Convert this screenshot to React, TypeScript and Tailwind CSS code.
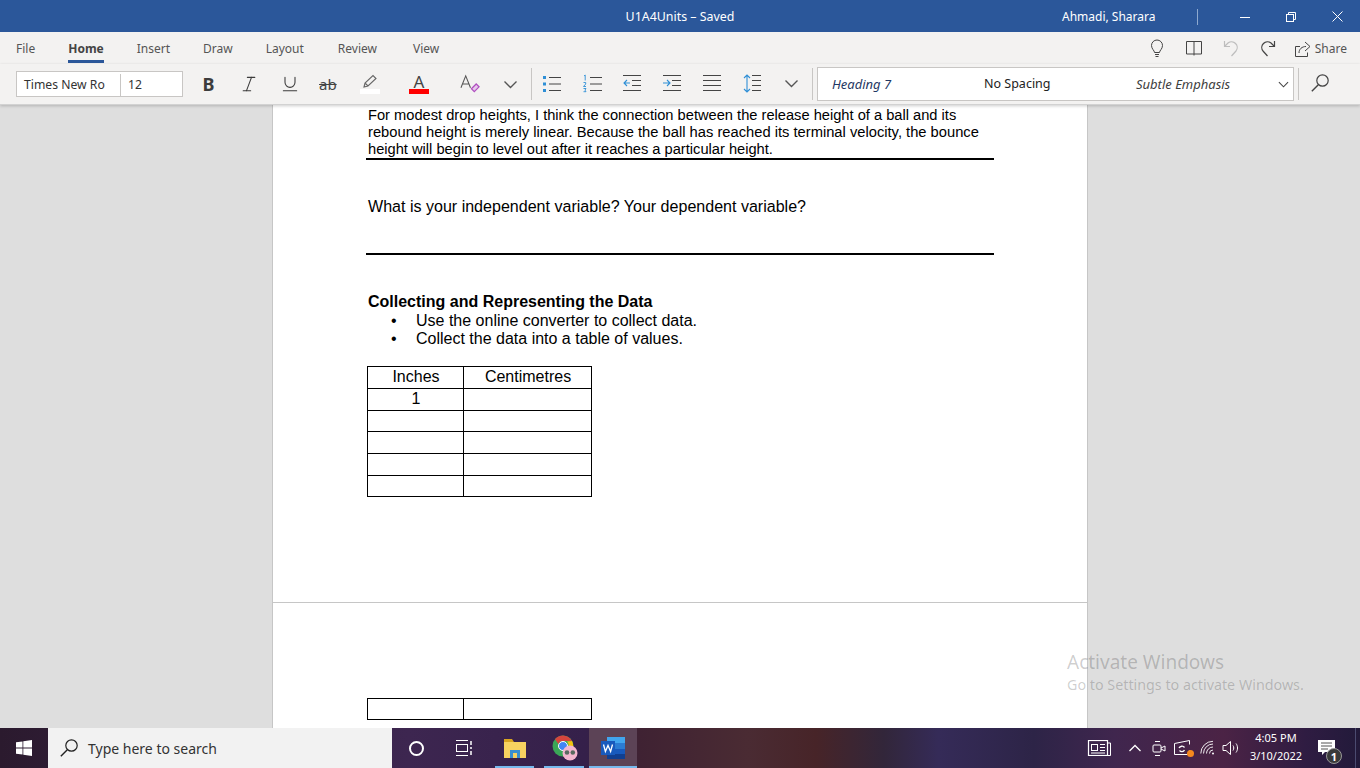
import React from "react";
import { Italic, Underline } from "lucide-react";

const UI = "font-['Noto_Sans',sans-serif]";

function Tab({ label, active, className }: { label: string; active?: boolean; className?: string }) {
  return (
    <div className={`relative flex h-8 items-center pt-[2px] ${className ?? ""}`}>
      <span className={active ? "text-[12px] font-bold text-[#444]" : "text-[12px] text-[#555]"}>{label}</span>
      {active && <div className="absolute bottom-[1px] left-0 right-0 h-[3px] bg-[#2b579a]" />}
    </div>
  );
}

function Chevron({ w = 17, color = "#555" }: { w?: number; color?: string }) {
  return (
    <svg width={w} height={w} viewBox="0 0 17 17" fill="none" stroke={color} strokeWidth="1.4" className="shrink-0">
      <path d="M2.500 5.500l6 6 6-6" />
    </svg>
  );
}

function Magnifier({ size = 18, color = "#444" }: { size?: number; color?: string }) {
  return (
    <svg width={size} height={size} viewBox="0 0 18 18" fill="none" stroke={color} strokeWidth="1.200" className="shrink-0">
      <circle cx="11.500" cy="6.500" r="5.700" />
      <path d="M7.300 10.700L.8 17.200" strokeWidth="1.400" />
    </svg>
  );
}

function ListIcon({ kind }: { kind: "bullet" | "number" | "out" | "in" | "align" | "spacing" }) {
  const dark = "#444";
  const blue = "#2e8fd6";
  return (
    <svg width="20" height="20" viewBox="0 0 20 20" fill="none" className="shrink-0">
      {kind === "bullet" && (
        <>
          <rect x="1" y="2" width="3" height="3" fill={blue} />
          <rect x="1" y="8.500" width="3" height="3" fill={blue} />
          <rect x="1" y="15" width="3" height="3" fill={blue} />
          <path d="M7 3.500h12M7 10h12M7 16.500h12" stroke={dark} />
        </>
      )}
      {kind === "number" && (
        <>
          <path d="M2 2l1.200-1v5.500M1.500 8.500h2.200v1.500L1.500 12.500h2.500M1.500 14.500h2.500l-1 1.600 1 1.600h-2.500" stroke={blue} strokeWidth="0.900" />
          <path d="M8 3.500h12M8 10h12M8 16.500h12" stroke={dark} />
        </>
      )}
      {kind === "out" && (
        <>
          <path d="M1 1.500h18M10 6.500h9M10 11.500h9M1 16.500h18" stroke={dark} />
          <path d="M8 9H2M5 6L2 9l3 3" stroke={blue} strokeWidth="1.100" />
        </>
      )}
      {kind === "in" && (
        <>
          <path d="M1 1.500h18M10 6.500h9M10 11.500h9M1 16.500h18" stroke={dark} />
          <path d="M1 9h7M5 6l3 3-3 3" stroke={blue} strokeWidth="1.100" />
        </>
      )}
      {kind === "align" && <path d="M1 1.500h18M1 6.500h18M1 11.500h18M1 16.500h18" stroke={dark} />}
      {kind === "spacing" && (
        <>
          <path d="M10 1.500h9M10 6.500h9M10 11.500h9M10 16.500h9" stroke={dark} />
          <path d="M5 1v17M2 4l3-3 3 3M2 15l3 3 3-3" stroke={blue} strokeWidth="1.100" />
        </>
      )}
    </svg>
  );
}

function Ribbon() {
  return (
    <div className={`flex h-[40px] items-start bg-[#f3f2f1] ${UI}`}>
      <div className="ml-4 mt-[7px] flex h-[26px] w-[167px] border border-[#c8c6c4] bg-white pt-[2px] text-[12.2px] text-[#333]">
        <div className="flex w-[104px] items-center border-r border-[#c8c6c4] pl-[7px]">Times New Ro</div>
        <div className="flex items-center pl-[7px]">12</div>
      </div>
      <div className="ml-[17px] mt-[10px] flex h-[20px] items-center text-[#3c3c3c]">
        <span className="flex w-[17px] justify-center text-[18px] font-bold leading-[20px]">B</span>
        <Italic size={20} strokeWidth={1.300} className="ml-[22px]" />
        <Underline size={20} strokeWidth={1.300} className="ml-[21px]" />
        <span className="ml-[19px] w-[19px] text-[15px] leading-[20px] text-[#444] line-through">ab</span>
        <div className="ml-[22px] flex w-5 flex-col items-center">
          <svg width="20" height="15" viewBox="0 0 20 15" fill="none">
            <path d="M4 13l1-4 8-7.500 3 3L8 12zM5 9l3 3" stroke="#666" strokeWidth="1.100" />
          </svg>
          <div className="h-[5px] w-5 bg-white" />
        </div>
        <div className="ml-[29px] flex w-5 flex-col items-center">
          <span className="h-[15px] text-[17px] leading-[16px] text-[#444]">A</span>
          <div className="h-[5px] w-5 bg-[#f00]" />
        </div>
        <div className="ml-[31px] flex w-[20px]">
          <svg width="21" height="20" viewBox="0 0 21 20" fill="none">
            <path d="M1 14L6 1.500 11 14M2.800 10h6.400" stroke="#555" strokeWidth="1.100" />
            <path d="M12 15l5-5 3 3-5 5z" stroke="#b04fc0" strokeWidth="1.300" fill="#e7c8ec" />
          </svg>
        </div>
        <div className="ml-[22px]"><Chevron /></div>
      </div>
      <div className="ml-[12px] mt-[4px] h-[32px] w-px bg-[#c8c6c4]" />
      <div className="ml-[10px] mt-[10px] flex items-center gap-[20px]">
        <ListIcon kind="bullet" />
        <ListIcon kind="number" />
        <ListIcon kind="out" />
        <ListIcon kind="in" />
        <ListIcon kind="align" />
        <ListIcon kind="spacing" />
      </div>
      <div className="ml-[21px] mt-[11px]"><Chevron /></div>
      <div className="ml-[12px] mt-[4px] h-[32px] w-px bg-[#c8c6c4]" />
      <div className="ml-[4px] mt-[3px] flex h-[34px] w-[477px] items-center border border-[#c8c6c4] bg-white pt-[1px] text-[#222]">
        <span className="ml-[14px] w-[152px] text-[13px] italic text-[#1f3763]">Heading 7</span>
        <span className="w-[152px] text-[12.500px]">No Spacing</span>
        <span className="text-[13px] italic text-[#404040]">Subtle Emphasis</span>
        <div className="ml-auto mr-[3px]"><Chevron w={13} color="#444" /></div>
      </div>
      <div className="ml-[4px] mt-[4px] h-[32px] w-px bg-[#c8c6c4]" />
      <div className="ml-[12px] mt-[10px]"><Magnifier /></div>
    </div>
  );
}

function Row({ a, b, h }: { a?: string; b?: string; h: string }) {
  return (
    <div className={`flex ${h} border-b border-black`}>
      <div className="flex w-[96px] items-center justify-center border-r border-black pb-[2px] pl-[1px]">{a}</div>
      <div className="flex flex-1 items-center justify-center pb-[2px] pl-[1px]">{b}</div>
    </div>
  );
}

function Page() {
  return (
    <div className="mx-auto h-[640px] w-[816px] shrink-0 border-x border-[#c6c6c6] bg-white pt-[2px] font-['Liberation_Sans',sans-serif] text-[14.670px] leading-[17px] text-black">
      <div className="ml-[93px] w-[628px]">
        <div className="border-b-2 border-black pl-[2px]">
          <p>For modest drop heights, I think the connection between the release height of a ball and its</p>
          <p className="text-[14.720px]">rebound height is merely linear. Because the ball has reached its terminal velocity, the bounce</p>
          <p>height will begin to level out after it reaches a particular height.</p>
        </div>
        <p className="mt-[37px] pl-[2px] text-[16.060px] leading-[18px]">What is your independent variable? Your dependent variable?</p>
        <div className="mt-[38px] h-[2px] bg-black" />
        <p className="mt-[38px] pl-[2px] text-[16px] font-bold leading-[18px]">Collecting and Representing the Data</p>
        <ul className="mt-[1px] text-[16px] leading-[18px]">
          <li className="flex"><span className="ml-[25px] w-[25px]">•</span>Use the online converter to collect data.</li>
          <li className="flex"><span className="ml-[25px] w-[25px]">•</span>Collect the data into a table of values.</li>
        </ul>
        <div className="ml-[1px] mt-[18px] w-[225px] border-x border-t border-black text-[16px]">
          <Row a="Inches" b="Centimetres" h="h-[22px]" />
          <Row a="1" h="h-[22px]" />
          <Row h="h-[21px]" />
          <Row h="h-[22px]" />
          <Row h="h-[22px]" />
          <Row h="h-[21px]" />
        </div>
      </div>
      <div className="mt-[105px] h-px bg-[#c6c6c6]" />
      <div className="ml-[94px] mt-[95px] w-[225px] border-x border-t border-black">
        <Row h="h-[21px]" />
      </div>
    </div>
  );
}

function Taskbar() {
  return (
    <div className={`relative flex h-[40px] items-stretch bg-[linear-gradient(90deg,#2b1a2e_0%,#3d2650_30%,#35204a_43%,#3f2233_47%,#4a2b33_55%,#472428_60%,#32263a_65%,#352b58_69%,#2d2447_76%,#40264e_82%,#4b2345_90%,#2f1c42_96%,#221a3a_100%)] text-white ${UI}`}>
      <div className="flex w-[48px] items-center justify-center">
        <svg width="16" height="16" viewBox="0 0 16 16" fill="white"><path d="M0 2.300l6.500-.9v6.200H0zM7.300 1.300L16 0v7.600H7.300zM0 8.400h6.500v6.200L0 13.700zM7.300 8.400H16V16l-8.700-1.300z" /></svg>
      </div>
      <div className="flex w-[344px] items-center bg-[#f2f2f2] pl-[12px] text-[14px] text-[#333]">
        <Magnifier color="#222" />
        <span className="ml-[10px]">Type here to search</span>
      </div>
      <div className="flex w-[48px] items-center justify-center">
        <div className="h-[15px] w-[15px] rounded-full border-[2.500px] border-white" />
      </div>
      <div className="flex w-[48px] items-center justify-center">
        <svg width="18" height="16" viewBox="0 0 18 16" fill="none" stroke="white"><path d="M1 .5h12M1 15.500h12" /><rect x="1.500" y="4.500" width="11" height="7" /><path d="M16 1v4M16 7v2M16 11v4" strokeWidth="1.500" /></svg>
      </div>
      <div className="relative ml-[7px] flex w-[39px] items-center justify-center">
        <svg width="22" height="19" viewBox="0 0 22 19"><path d="M0 0h8l2 3H0z" fill="#d9a520" /><rect x="0" y="3" width="22" height="16" fill="#f7d260" /><rect x="6" y="11" width="10" height="8" fill="#3a8fd0" /><rect x="9" y="14" width="4" height="5" fill="#f7d260" /></svg>
        <div className="absolute bottom-0 left-0 right-0 h-[2px] bg-[#76b9ed]" />
      </div>
      <div className="relative ml-[10px] flex w-[40px] items-center justify-center">
        <svg width="26" height="26" viewBox="0 0 26 26" className="ml-[2px]">
          <circle cx="11" cy="11" r="10.500" fill="#3aa757" />
          <path d="M11 .5a10.500 10.500 0 0 1 9 5.500H11a5 5 0 0 0-4.600 3L3 4.200A10.500 10.500 0 0 1 11 .5z" fill="#d6453d" />
          <path d="M20 6A10.500 10.500 0 0 1 11 21.500l3-7a5 5 0 0 0 1-8z" fill="#f4c20d" />
          <circle cx="11" cy="11" r="4.500" fill="#4285f4" stroke="#fff" />
          <circle cx="18" cy="18" r="7.500" fill="#f4b6cf" />
          <circle cx="15" cy="17.500" r="2.300" fill="#5a6a60" />
          <circle cx="20.800" cy="17.500" r="2.300" fill="#5a6a60" />
        </svg>
        <div className="absolute bottom-0 left-0 right-0 h-[2px] bg-[#76b9ed]" />
      </div>
      <div className="relative ml-[5px] flex w-[48px] items-center justify-center bg-[#5c4356]">
        <svg width="24" height="22" viewBox="0 0 24 22">
          <rect x="6" y="0" width="18" height="6" fill="#41a5ee" />
          <rect x="6" y="6" width="18" height="6" fill="#2b7cd3" />
          <rect x="6" y="12" width="18" height="5" fill="#185abd" />
          <rect x="6" y="17" width="18" height="5" fill="#103f91" />
          <rect x="0" y="4" width="14" height="14" fill="#185abd" />
          <path d="M2.500 7.500l1.900 7 2.600-6 2.600 6 1.900-7" stroke="#fff" strokeWidth="1.300" fill="none" />
        </svg>
        <div className="absolute bottom-0 left-0 right-0 h-[2px] bg-[#76b9ed]" />
      </div>
      <div className="ml-auto flex items-center">
        <svg width="24" height="16" viewBox="0 0 24 16" fill="none" stroke="white"><rect x="1.500" y=".5" width="19" height="15" strokeWidth="1.200" /><rect x="4.500" y="4.500" width="6" height="6" /><path d="M13 4.500h5M13 7.500h5M13 10.500h5M4 13h14M21 3h2.500v12.500H19" /></svg>
        <svg width="16" height="16" viewBox="0 0 16 16" fill="none" stroke="white" strokeWidth="1.300" className="ml-[16px]"><path d="M2.500 11l5.500-5.500 5.500 5.500" /></svg>
        <svg width="14" height="18" viewBox="0 0 14 18" fill="none" stroke="white" className="ml-[9px]"><rect x="1" y="6" width="8" height="7" rx="1" /><path d="M9 9l4-2v5l-4-2M3 2.500h5M3 16.500h5" /></svg>
        <div className="relative ml-[8px]">
          <svg width="18" height="16" viewBox="0 0 18 16" fill="none" stroke="white"><path d="M.5 3.500l15-3v4M.5 3.500v11h15v-4" /><path d="M5 8c1-2 4-2.500 5.500-.5M10.500 10c-1 2-3.500 2-5 .5" strokeWidth="1.300" /></svg>
          <div className="absolute bottom-[-1px] right-[-2px] h-[7px] w-[7px] rounded-full bg-[#f7891e]" />
        </div>
        <svg width="16" height="16" viewBox="0 0 16 16" fill="none" stroke="white" className="ml-[8px]">
          <circle cx="13" cy="13.500" r="1" fill="white" stroke="none" />
          <path d="M9.500 13.500A3.500 3.500 0 0 1 13 10M6.500 13.500A6.500 6.500 0 0 1 13 7M3.500 13.500A9.500 9.500 0 0 1 13 4M.8 13.500A12.200 12.200 0 0 1 13 1.300" strokeWidth="0.900" />
        </svg>
        <svg width="18" height="16" viewBox="0 0 18 16" fill="none" stroke="white" className="ml-[6px]">
          <path d="M1 5.500h3L8.500 1.500v13L4 10.500H1z" />
          <path d="M11 5.500c1 1.500 1 3.500 0 5M14 3.500c2 2.500 2 6.500 0 9" />
        </svg>
        <div className="ml-[10px] flex w-[52px] flex-col items-center pb-[2px] text-[11px] leading-[18px]">
          <span className="whitespace-nowrap">4:05 PM</span>
          <span className="whitespace-nowrap">3/10/2022</span>
        </div>
        <div className="relative ml-[16px] mr-[20px] h-[22px] w-[22px]">
          <svg width="18" height="16" viewBox="0 0 18 16" className="mt-[3px]"><path d="M0 0h17v12H7l-3 3v-3H0z" fill="white" /><path d="M3 3h11M3 6h11M3 9h7" stroke="#555" /></svg>
          <div className="absolute bottom-[-5px] right-[-2px] flex h-[16px] w-[16px] items-center justify-center rounded-full border border-[#999] bg-[#3a3a3a] text-[11px] font-bold leading-none">1</div>
        </div>
      </div>
      <div className="absolute bottom-0 right-[4px] top-0 w-px bg-[#4b4b70]" />
    </div>
  );
}

export default function App() {
  return (
    <div className="relative flex h-[768px] w-[1360px] flex-col overflow-hidden bg-[#dedede]">
      <div className={`relative flex h-[32px] shrink-0 items-center bg-[#2b579a] pt-[1px] text-white ${UI}`}>
        <span className="absolute left-0 right-0 top-[8px] text-center text-[12.400px] leading-[18px]">U1A4Units – Saved</span>
        <span className="ml-[1062px] w-[93px] whitespace-nowrap text-[12px]">Ahmadi, Sharara</span>
        <div className="ml-[42px] h-[16px] w-px bg-[#8ea9cf]" />
        <svg width="10" height="10" viewBox="0 0 10 10" stroke="white" className="ml-[42px]"><path d="M0 5.500h10" /></svg>
        <svg width="10" height="10" viewBox="0 0 10 10" fill="none" stroke="white" className="ml-[36px]"><rect x=".5" y="2.500" width="7" height="7" /><path d="M2.500 2.500v-2h7v7h-2" /></svg>
        <svg width="11" height="11" viewBox="0 0 11 11" stroke="white" className="ml-[36px]"><path d="M.5 .5l10 10M10.500 .5l-10 10" /></svg>
      </div>
      <div className={`flex h-[32px] shrink-0 items-center bg-[#f3f2f1] ${UI}`}>
        <div className="ml-[16px] flex gap-[33px]">
          <Tab label="File" />
          <Tab label="Home" active />
          <Tab label="Insert" />
          <Tab label="Draw" />
          <Tab label="Layout" />
          <Tab label="Review" className="ml-[1px]" />
          <Tab label="View" className="ml-[3px]" />
        </div>
        <div className="ml-auto flex items-center pt-[1px] text-[#444]">
          <svg width="16" height="19" viewBox="0 0 16 19" fill="none" stroke="#444"><path d="M5.500 13.500c0-2-3-3.500-3-7a5.500 5.500 0 0 1 11 0c0 3.500-3 5-3 7zM6 15.500h4M6.500 17.500h3" /></svg>
          <svg width="16" height="15" viewBox="0 0 16 15" fill="none" stroke="#444" className="ml-[21px]"><path d="M.5 .5h15v12.500H.5zM8 .5V14.500" /></svg>
          <svg width="16" height="17" viewBox="0 0 16 17" fill="none" stroke="#bdbdbd" strokeWidth="1.200" className="ml-[21px]"><path d="M1.500 1v5.500H7M1.500 6.500L5 3a5.700 5.700 0 0 1 8 8l-4.500 5" /></svg>
          <svg width="16" height="17" viewBox="0 0 16 17" fill="none" stroke="#444" strokeWidth="1.200" className="ml-[21px] -scale-x-100"><path d="M1.500 1v5.500H7M1.500 6.500L5 3a5.700 5.700 0 0 1 8 8l-4.500 5" /></svg>
          <svg width="16" height="16" viewBox="0 0 16 16" fill="none" stroke="#444" className="ml-[19px]"><path d="M5 5.500H.5v10h12v-4M4 12c0-4 3-6.500 7-6.500M10 1l5 4.500-5 4.500" /></svg>
          <span className="ml-[4px] mr-[13px] text-[12px] text-[#555]">Share</span>
        </div>
      </div>
      <div className="relative z-10 shrink-0 shadow-[0_1px_3px_rgba(0,0,0,0.2)]">
        <Ribbon />
        <div className="h-[1px] bg-[#d2d2d2]" />
      </div>
      <div className="flex min-h-0 flex-1 overflow-hidden">
        <Page />
      </div>
      <div className="shrink-0"><Taskbar /></div>
      <div className={`absolute left-[1067px] top-[650px] text-black/20 ${UI}`}>
        <div className="whitespace-nowrap text-[19px] leading-[25px]">Activate Windows</div>
        <div className="mt-[1px] whitespace-nowrap text-[14.300px] leading-[18px]">Go to Settings to activate Windows.</div>
      </div>
    </div>
  );
}
